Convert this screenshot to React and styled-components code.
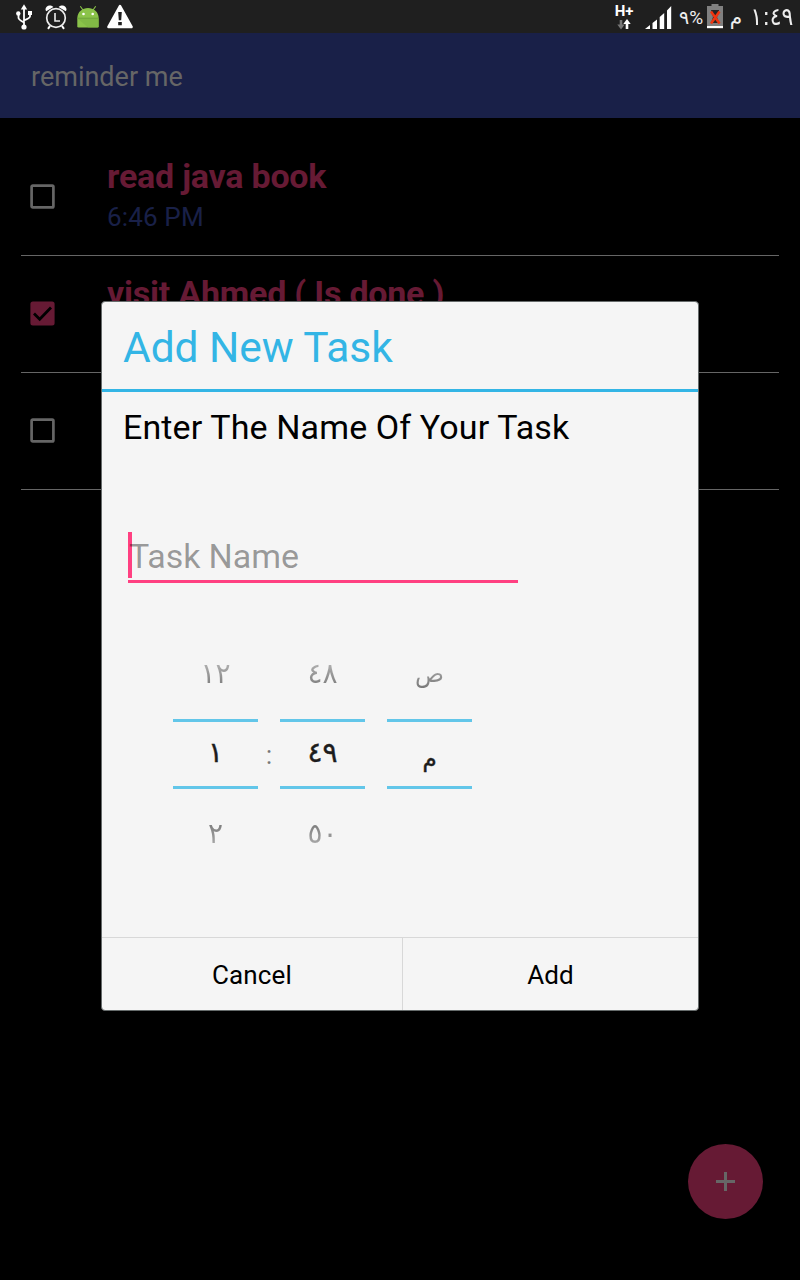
import React from "react";
import styled, { createGlobalStyle } from "styled-components";

const GlobalStyle = createGlobalStyle`
  * { box-sizing: border-box; }
  body { margin: 0; background: #000; font-family: Roboto, "Liberation Sans", sans-serif; }
`;

const Screen = styled.div`
  position: relative;
  display: flex;
  flex-direction: column;
  width: 800px;
  height: 1280px;
  overflow: hidden;
  background: #000;
`;

const StatusBar = styled.header`
  display: flex;
  justify-content: space-between;
  height: 33px;
  flex: none;
  padding: 0 7px 0 14px;
  background: #1f1f1f;
  color: #eee;
`;

const StatusGroup = styled.div`
  display: flex;
  align-items: center;
`;

const StatusIcon = styled.svg`
  display: block;
  flex: none;
  margin-right: ${(p) => p.$gap || 0}px;
`;

const StatusText = styled.span`
  display: flex;
  justify-content: center;
  width: ${(p) => p.$width}px;
  padding-top: ${(p) => p.$drop || 0}px;
  font-family: ${(p) => (p.$arabic ? '"DejaVu Sans"' : 'Roboto, "DejaVu Sans"')}, sans-serif;
  font-size: ${(p) => p.$size}px;
  line-height: 30px;
  margin-right: ${(p) => p.$gap || 0}px;
  white-space: nowrap;
`;

const ClockText = styled(StatusText)`
  transform: scaleY(1.12);
`;

const AppBar = styled.div`
  display: flex;
  align-items: center;
  height: 85px;
  flex: none;
  padding: 3px 31px 0;
  background: #192048;
`;

const AppTitle = styled.h1`
  margin: 0;
  font-size: 27px;
  font-weight: 400;
  color: #666;
`;

const TaskList = styled.ul`
  list-style: none;
  margin: 0;
  padding: 21px 21px 0;
`;

const TaskRow = styled.li`
  display: flex;
  height: 117px;
  border-bottom: 1px solid #666;
`;

const CheckCell = styled.div`
  width: 86px;
  padding: 45px 0 0 9px;
`;

const TaskBody = styled.div`
  padding-top: 17px;
`;

const TaskTitle = styled.div`
  font-size: 34px;
  line-height: 40px;
  font-weight: 700;
  letter-spacing: -0.22px;
  color: #661a34;
  white-space: pre;
`;

const TaskTime = styled.div`
  font-size: 26px;
  line-height: 43px;
  letter-spacing: 0.15px;
  color: #192048;
`;

const Fab = styled.button`
  position: absolute;
  left: 688px;
  top: 1144px;
  display: flex;
  align-items: center;
  justify-content: center;
  width: 75px;
  height: 75px;
  padding: 0;
  border: 0;
  border-radius: 50%;
  background: #661a34;
`;

const Dialog = styled.section`
  position: absolute;
  left: 101px;
  top: 301px;
  display: flex;
  flex-direction: column;
  width: 598px;
  height: 710px;
  border: 1px solid #666b6b;
  border-radius: 4px;
  background: #f5f5f5;
`;

const DialogTitle = styled.h2`
  margin: 0;
  height: 90px;
  padding: 0 21px;
  border-bottom: 3px solid #33b5e5;
  font-size: 42.5px;
  line-height: 91px;
  font-weight: 400;
  letter-spacing: -0.05px;
  color: #33b5e5;
`;

const DialogBody = styled.div`
  flex: 1;
  padding: 15px 21px 0;
`;

const Prompt = styled.p`
  margin: 0;
  font-size: 34px;
  line-height: 40px;
  letter-spacing: 0.12px;
  color: #000;
`;

const Field = styled.div`
  display: flex;
  width: 390px;
  height: 51px;
  margin: 85px 0 0 5px;
  border-bottom: 3px solid #ff4081;
`;

const Caret = styled.span`
  width: 4px;
  height: 46px;
  margin-right: -3px;
  background: #ff4081;
`;

const Placeholder = styled.span`
  position: relative;
  font-size: 34px;
  line-height: 48px;
  letter-spacing: -0.1px;
  color: rgba(0, 0, 0, 0.39);
`;

const TimePicker = styled.div`
  display: flex;
  margin: 50px 0 0 50px;
`;

const Wheel = styled.div`
  width: 85px;
  display: flex;
  flex-direction: column;
`;

const WheelItem = styled.div`
  height: 86px;
  padding-top: ${(p) => (p.$below ? 4 : 0)}px;
  color: transparent;
  text-align: center;
  font-family: "DejaVu Sans", sans-serif;
  font-size: ${(p) => (p.$letter ? 24 : 28)}px;
  line-height: ${(p) => (p.$letter ? 83 : 81)}px;
  background: linear-gradient(${(p) => (p.$below ? "#777 38%, #aaa 65%" : "#bbb 30%, #777 65%")});
  background-clip: text;
  -webkit-background-clip: text;
`;

const WheelCurrent = styled.div`
  height: 70px;
  padding-top: ${(p) => (p.$letter ? 6 : 0)}px;
  border-top: 3px solid #62c6e9;
  border-bottom: 3px solid #62c6e9;
  text-align: center;
  font-family: "DejaVu Sans", sans-serif;
  font-size: ${(p) => (p.$letter ? 23 : 28)}px;
  line-height: 61px;
  -webkit-text-stroke: 0.4px #1c1c1c;
  color: #1c1c1c;
`;

const Colon = styled.div`
  width: 22px;
  padding: 103px 0 0;
  text-align: center;
  font-size: 25px;
  line-height: 40px;
  color: #777;
`;

const WheelGap = styled.div`
  width: 22px;
`;

const DialogFooter = styled.footer`
  display: flex;
  height: 73px;
  border-top: 1px solid #d8d8d8;
`;

const DialogButton = styled.button`
  width: ${(p) => p.$width}px;
  padding: 2px 0 0;
  border: 0;
  border-left: ${(p) => (p.$divided ? "1px solid #d8d8d8" : "0")};
  background: transparent;
  font-family: inherit;
  font-size: 26px;
  letter-spacing: ${(p) => (p.$divided ? 0 : 0.15)}px;
  color: #000;
`;

function Checkbox({ checked }) {
  return (
    <svg width="25" height="25" viewBox="0 0 25 25" display="block">
      {checked ? (
        <>
          <rect x=".4" y=".4" width="24.2" height="24.2" rx="2.5" fill="#661a34" />
          <path d="M4 12.5L9.7 18.2L21 6.5" fill="none" stroke="#000" strokeWidth="2.8" />
        </>
      ) : (
        <rect x="1.6" y="1.6" width="21.8" height="21.8" rx="1.2" fill="none" stroke="#666" strokeWidth="2.7" />
      )}
    </svg>
  );
}

function UsbIcon() {
  return (
    <StatusIcon $gap={11} width="19" height="33" viewBox="14 0 19 33">
      <path d="M24 8V27M18.5 14.5V18Q18.5 19.5 24 22.5M30 14V16.5Q30 18 24 20.5" fill="none" stroke="#fff" strokeWidth="1.8" />
      <path d="M24 4.3L27.2 9.5H20.8Z" fill="#fff" />
      <circle cx="18.3" cy="13.5" r="2.2" fill="#fff" />
      <rect x="28" y="11" width="4" height="4" fill="#fff" />
      <circle cx="24" cy="27" r="2.6" fill="#fff" />
    </StatusIcon>
  );
}

function AlarmIcon() {
  return (
    <StatusIcon $gap={8} width="24" height="33" viewBox="44 0 24 33">
      <circle cx="56" cy="18" r="9.3" fill="none" stroke="#eee" strokeWidth="1.7" />
      <path d="M55 13V21H60" fill="none" stroke="#eee" strokeWidth="1.6" />
      <path d="M46.2 11.2C43.6 8 48.6 2.8 53.4 7ZM65.8 11.2C68.4 8 63.4 2.8 58.6 7Z" fill="#fff" />
      <path d="M50 26L48 28.8M62 26L64 28.8" stroke="#fff" strokeWidth="2" />
    </StatusIcon>
  );
}

function AndroidIcon() {
  return (
    <StatusIcon $gap={8} width="23" height="33" viewBox="76 0 23 33">
      <path d="M80.3 6.2L83.3 10.5M95.7 6.2L92.7 10.5" stroke="#8bc34a" strokeWidth="1.1" />
      <path d="M77.3 18.5C77.3 4.5 98.7 4.5 98.7 18.5V26.3Q98.7 27.5 97.5 27.5H78.5Q77.3 27.5 77.3 26.3Z" fill="#8bc34a" />
      <path d="M77.3 18.2H98.7V26.3Q98.7 27.5 97.5 27.5H88Z" fill="#7cb342" opacity=".65" />
      <path d="M77.3 18.2H98.7" stroke="#689f38" strokeWidth=".8" />
      <circle cx="83.5" cy="14" r="1.3" fill="#fff" />
      <circle cx="92.7" cy="14" r="1.3" fill="#fff" />
    </StatusIcon>
  );
}

function WarningIcon() {
  return (
    <StatusIcon width="26" height="33" viewBox="107 0 26 33">
      <path d="M120 6.2L131.5 27H108.5Z" fill="#fff" stroke="#fff" strokeWidth="2.6" strokeLinejoin="round" />
      <path d="M118.2 12H121.8L121.2 20.3H118.8ZM118.2 22H121.8V25.3H118.2Z" fill="#1f1f1f" />
    </StatusIcon>
  );
}

const NetworkCell = styled.div`
  display: flex;
  flex-direction: column;
  align-items: center;
  width: 18px;
  height: 33px;
  padding-top: 4px;
  margin-right: 12px;
  font-size: 15px;
  line-height: 15px;
  font-weight: 700;
  color: #fff;
`;

function NetworkIcon() {
  return (
    <NetworkCell>
      <span>H+</span>
      <StatusIcon width="14" height="11" viewBox="0 0 14 11">
        <path d="M4 1V7" stroke="#777" strokeWidth="2.6" />
        <path d="M.3 5.5H7.7L4 10.5Z" fill="#777" />
        <path d="M10 4V10" stroke="#fff" strokeWidth="2.6" />
        <path d="M6.3 5H13.7L10 0Z" fill="#fff" />
      </StatusIcon>
    </NetworkCell>
  );
}

function SignalIcon() {
  return (
    <StatusIcon $gap={7} width="27" height="33" viewBox="645 0 27 33">
      <path d="M645 29L650 25V29ZM652.5 23L657 19.5V29H652.5ZM659.7 17L664.2 13V29H659.7ZM667 10.5L671.2 6V29H667Z" fill="#fff" />
    </StatusIcon>
  );
}

function BatteryIcon() {
  return (
    <StatusIcon $gap={6} width="16" height="33" viewBox="707 0 16 33">
      <path d="M707 6H711.5V4H718.5V6H723V26H707Z" fill="#808080" />
      <rect x="707" y="26" width="16" height="2.2" fill="#fff" />
      <path d="M711 10H719V13L717 17L719 23H711L713 17Z" fill="#252525" />
      <path d="M711 11.5L719.5 23.5M719.5 11.5L711 23.5" stroke="#ef3510" strokeWidth="2.5" />
    </StatusIcon>
  );
}

const tasks = [
  { title: "read java book", time: "6:46 PM", done: false },
  { title: "visit Ahmed ( Is done )", time: "", done: true },
  { title: "", time: "", done: false },
];

export default function App() {
  return (
    <Screen>
      <GlobalStyle />
      <StatusBar>
        <StatusGroup>
          <UsbIcon />
          <AlarmIcon />
          <AndroidIcon />
          <WarningIcon />
        </StatusGroup>
        <StatusGroup>
          <NetworkIcon />
          <SignalIcon />
          <StatusText $size={19} $width={24} $gap={4} $drop={2}>٩%</StatusText>
          <BatteryIcon />
          <StatusText $arabic $size={20} $width={14} $gap={8}>م</StatusText>
          <ClockText $arabic $size={22} $width={42}>١:٤٩</ClockText>
        </StatusGroup>
      </StatusBar>
      <AppBar>
        <AppTitle>reminder me</AppTitle>
      </AppBar>
      <TaskList>
        {tasks.map((task, i) => (
          <TaskRow key={i}>
            <CheckCell>
              <Checkbox checked={task.done} />
            </CheckCell>
            <TaskBody>
              <TaskTitle>{task.title}</TaskTitle>
              <TaskTime>{task.time}</TaskTime>
            </TaskBody>
          </TaskRow>
        ))}
      </TaskList>
      <Fab aria-label="Add task">
        <svg width="19" height="19" viewBox="0 0 19 19">
          <path d="M9.5 0V19M0 9.5H19" stroke="#666" strokeWidth="3" />
        </svg>
      </Fab>
      <Dialog>
        <DialogTitle>Add New Task</DialogTitle>
        <DialogBody>
          <Prompt>Enter The Name Of Your Task</Prompt>
          <Field>
            <Caret />
            <Placeholder>Task Name</Placeholder>
          </Field>
          <TimePicker>
            <Wheel>
              <WheelItem>١٢</WheelItem>
              <WheelCurrent>١</WheelCurrent>
              <WheelItem $below>٢</WheelItem>
            </Wheel>
            <Colon>:</Colon>
            <Wheel>
              <WheelItem>٤٨</WheelItem>
              <WheelCurrent>٤٩</WheelCurrent>
              <WheelItem $below>٥٠</WheelItem>
            </Wheel>
            <WheelGap />
            <Wheel>
              <WheelItem $letter>ص</WheelItem>
              <WheelCurrent $letter>م</WheelCurrent>
            </Wheel>
          </TimePicker>
        </DialogBody>
        <DialogFooter>
          <DialogButton $width={300}>Cancel</DialogButton>
          <DialogButton $width={296} $divided>Add</DialogButton>
        </DialogFooter>
      </Dialog>
    </Screen>
  );
}
